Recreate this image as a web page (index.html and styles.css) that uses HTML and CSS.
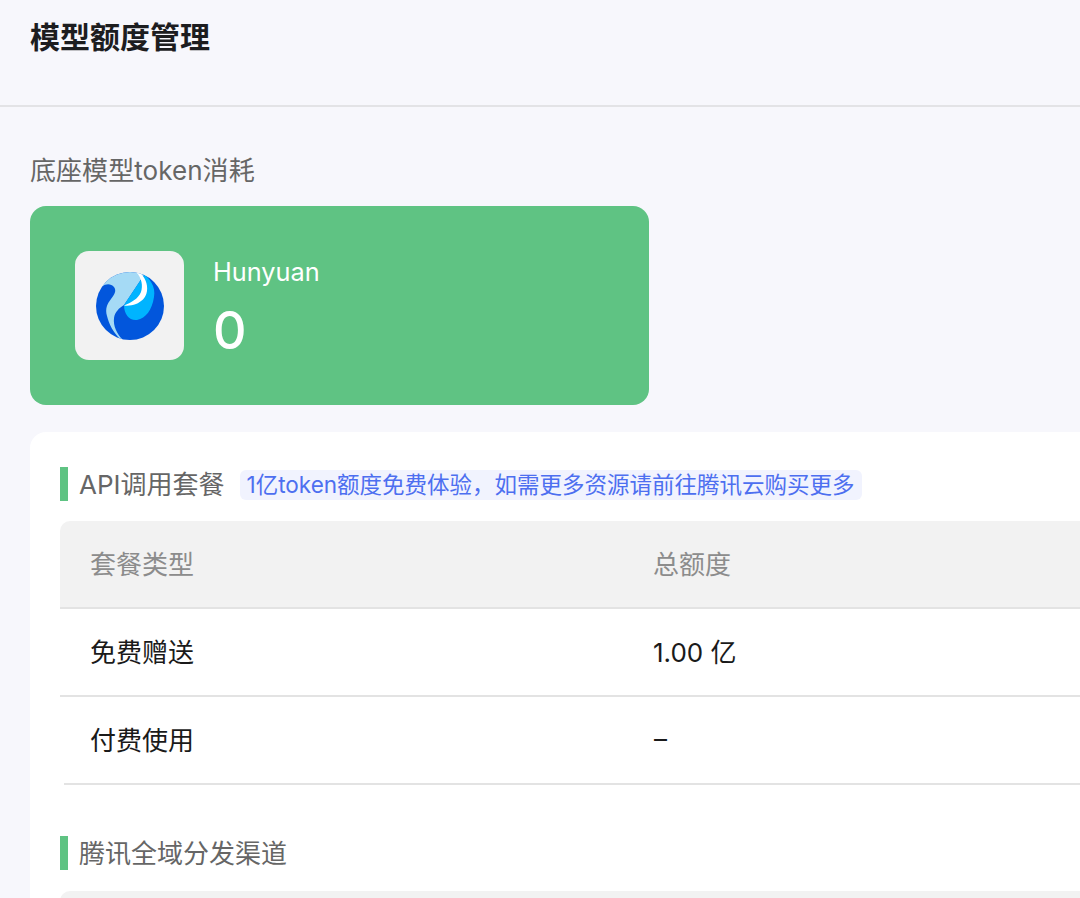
FILE: index.html
```html
<!DOCTYPE html>
<html lang="zh">
<head>
<meta charset="utf-8">
<title>模型额度管理</title>
<link rel="stylesheet" href="styles.css">
</head>
<body>
<header class="topbar"><h1 class="page-title">模型额度管理</h1></header>
<main class="content">
  <h2 class="usage-title">底座模型token消耗</h2>
  <section class="usage-card">
    <div class="logo-box">
      <svg class="logo" viewBox="0 0 68 68" width="68" height="68" aria-hidden="true">
        <defs><clipPath id="logo-clip"><circle cx="34" cy="34" r="34"/></clipPath></defs>
        <g clip-path="url(#logo-clip)">
          <rect width="68" height="68" fill="#0256dc"/>
          <path d="M7 14C9 12 15 11 18 15C21 19 18 23 15 27C11 32 9 37 11 44C13 52 17 60 24 67L27 68C21 62 17 54 18 46C19 40 23 36 28 33L50 0L5 0Z" fill="#a5daf5"/>
          <path d="M44 0C54 5 60 15 58 25C56 38 50 46 41 48C34 49 28 43 28 33L50 0Z" fill="#00b4ff"/>
          <path d="M28 33.5C36 30 42 27 45 20C47 14 46 6 40 0L43 0C49 5 52 12 51 19C50 26 45 30 40 32C36 33.5 32 34 28 33.5Z" fill="#fff"/>
        </g>
      </svg>
    </div>
    <div class="usage-text">
      <div class="model-name">Hunyuan</div>
      <div class="model-value">0</div>
    </div>
  </section>
  <section class="panel">
    <div class="section-head">
      <span class="marker"></span>
      <h3 class="section-title">API调用套餐</h3>
      <span class="hint">1亿token额度免费体验，如需更多资源请前往腾讯云购买更多</span>
    </div>
    <div class="table">
      <div class="row head-row"><div class="cell first">套餐类型</div><div class="cell">总额度</div></div>
      <div class="row"><div class="cell first">免费赠送</div><div class="cell">1.00 亿</div></div>
      <div class="row last-row"><div class="cell first">付费使用</div><div class="cell dash">–</div></div>
    </div>
    <div class="section-head second">
      <span class="marker"></span>
      <h3 class="section-title">腾讯全域分发渠道</h3>
    </div>
    <div class="table-stub"></div>
  </section>
</main>
</body>
</html>
```
FILE: styles.css
```css
* { box-sizing: border-box; }
html, body { margin: 0; height: 898px; overflow: hidden; }
body {
  background: #f7f7fc;
  font-family: "Inter", "Noto Sans CJK SC", sans-serif;
  width: 1080px;
}
.topbar { height: 107px; border-bottom: 2px solid #e3e3e6; padding: 18px 30px 0; }
.page-title { margin: 0; font-size: 30px; line-height: 38px; font-weight: 700; color: #1d1d1f; letter-spacing: 0; }
.content { padding: 46px 0 0 30px; }
.usage-title { margin: 0; font-size: 26px; line-height: 36px; font-weight: 400; color: #666; letter-spacing: 0.06px; }
.usage-card {
  margin-top: 17px; width: 619px; height: 199px; background: #5fc383; border-radius: 16px;
  padding: 45px; display: flex; gap: 29px; align-items: flex-start;
}
.logo-box { width: 109px; height: 109px; background: #f2f2f2; border-radius: 14px; display: flex; align-items: center; justify-content: center; flex: none; }
.logo { display: block; }
.usage-text { color: #fff; }
.model-name { font-size: 25.3px; line-height: 32px; margin-top: 5px; font-weight: 400; }
.model-value { font-size: 52px; line-height: 60px; margin-top: 13px; font-weight: 500; }
.panel { margin-top: 27px; background: #fff; border-radius: 16px 0 0 0; height: 470px; padding: 35px 0 0 30px; }
.section-head { display: flex; align-items: center; height: 34px; }
.marker { width: 8px; height: 34px; background: #5fc383; flex: none; margin-right: 11px; }
.section-title { margin: 2px 0 0; font-size: 26px; line-height: 34px; font-weight: 400; color: #666; white-space: nowrap; }
.hint {
  margin: 2px 0 0 15px; background: #f1f3fe; color: #4d6ff0; font-size: 22.5px; line-height: 30px;
  padding: 0 7px; border-radius: 6px; white-space: nowrap;
}
.table { margin-top: 20px; }
.row { display: flex; height: 88px; border-bottom: 2px solid #e3e3e3; align-items: center; color: #1a1a1a; font-size: 26px; padding-bottom: 4px; }
.head-row { background: #f2f2f2; color: #8c8c8c; border-radius: 10px 0 0 0; }
.last-row { margin-left: 4px; }
.last-row .first { padding-left: 26px; }
.cell { white-space: nowrap; }
.dash { margin-left: -3px; }
.first { width: 593px; padding-left: 30px; flex: none; }
.section-head.second { margin-top: 51px; }
.table-stub { margin-top: 21px; height: 40px; background: #f2f2f2; border-radius: 10px 0 0 0; }
```
